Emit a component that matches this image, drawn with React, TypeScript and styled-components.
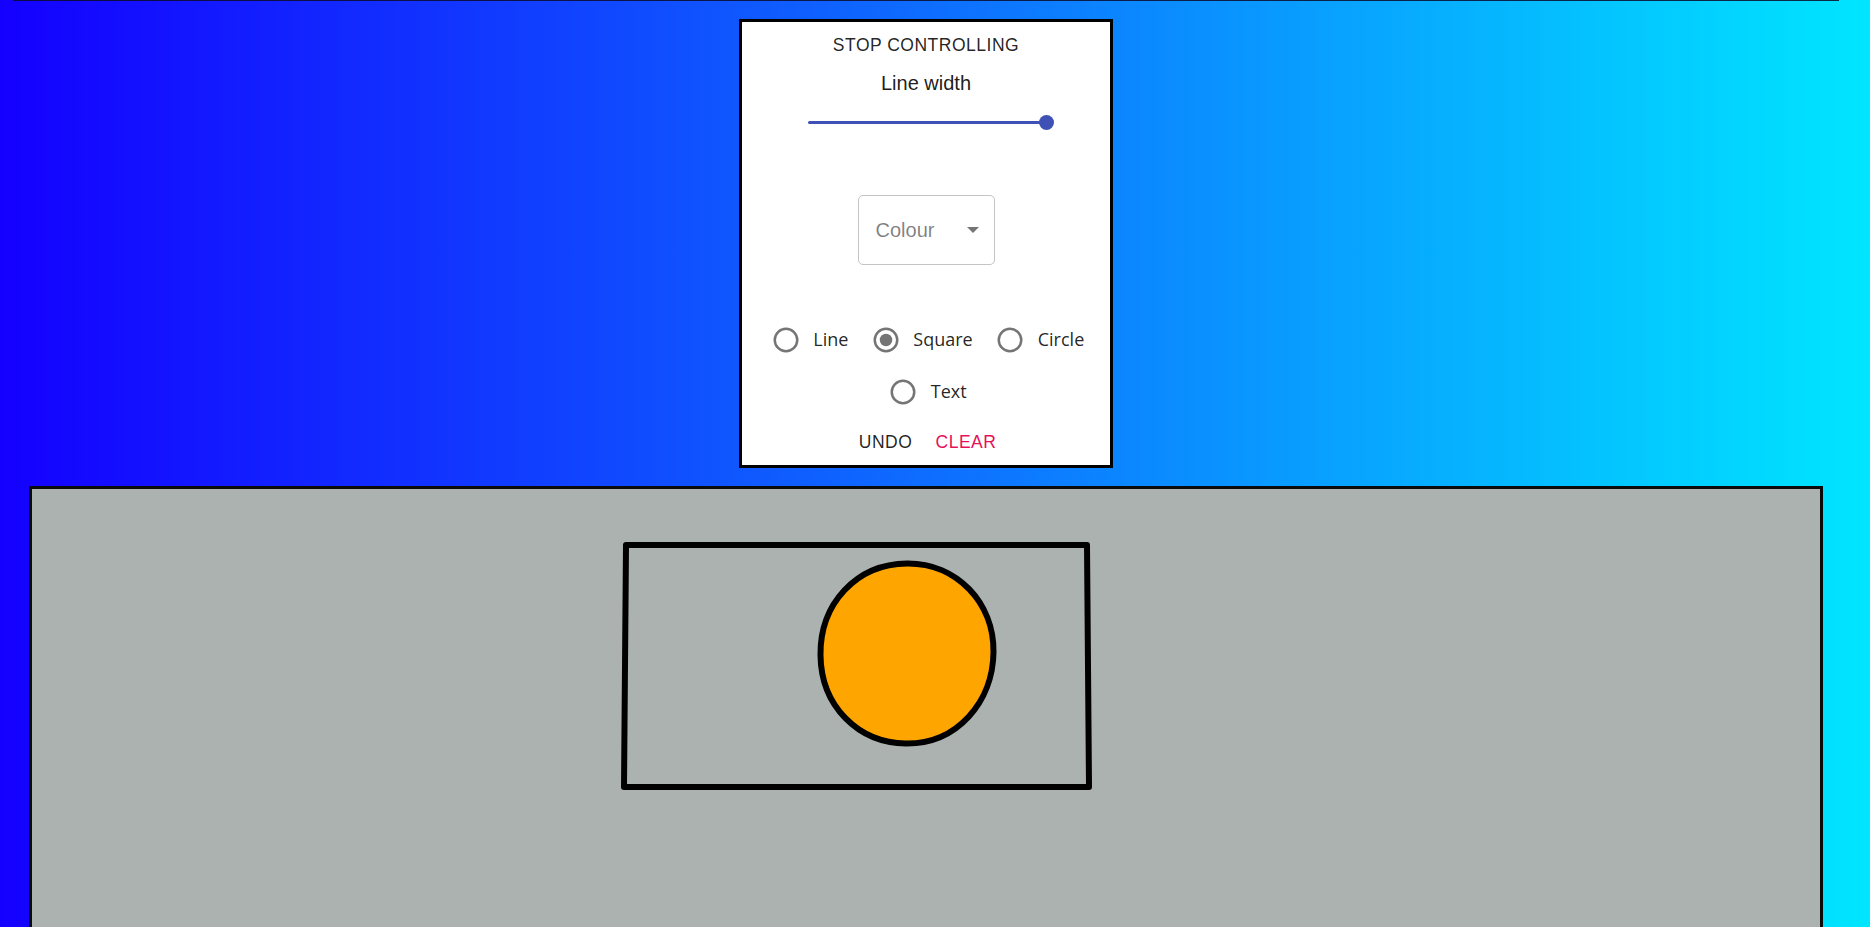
import React from "react";
import styled, { createGlobalStyle } from "styled-components";

const GlobalStyle = createGlobalStyle`
  html, body {
    margin: 0;
    padding: 0;
    height: 100%;
    overflow: hidden;
  }
  body {
    background: linear-gradient(to right, #1400ff 0%, #0e6eff 50%, #00e6ff 100%);
    font-family: "Liberation Sans", Arial, sans-serif;
  }
`;

const Page = styled.div`
  width: 1852px;
  min-height: 100vh;
  display: flex;
  flex-direction: column;
  align-items: center;
`;

const TopRule = styled.div`
  align-self: stretch;
  margin: 0 13px;
  height: 1px;
  background: rgba(10, 10, 40, 0.85);
`;

const Panel = styled.div`
  box-sizing: border-box;
  margin-top: 18px;
  width: 374px;
  border: 3px solid #000;
  background: #fff;
  display: flex;
  flex-direction: column;
  align-items: center;
  padding-bottom: 1px;
`;

const TextButton = styled.button<{ $tone?: "default" | "secondary" }>`
  box-sizing: border-box;
  height: 45px;
  min-width: 80px;
  padding: 2px 10px 0;
  border: none;
  background: transparent;
  display: flex;
  align-items: center;
  justify-content: center;
  font-family: "Liberation Sans", Arial, sans-serif;
  font-size: 17.5px;
  letter-spacing: 0.5px;
  text-transform: uppercase;
  color: ${(p) => (p.$tone === "secondary" ? "#e8105a" : "rgba(0,0,0,0.87)")};
  cursor: pointer;
`;

const Title = styled.div`
  margin-top: 1px;
  font-size: 20px;
  line-height: 30px;
  color: rgba(0, 0, 0, 0.9);
`;

const Slider = styled.div`
  margin-top: 6px;
  margin-left: 2px;
  width: 238px;
  height: 36px;
  display: flex;
  align-items: center;
`;

const Track = styled.div`
  flex: 1;
  height: 3px;
  border-radius: 2px;
  background: #3f51b5;
`;

const Thumb = styled.div`
  flex: none;
  width: 15px;
  height: 15px;
  margin: 0 -7.5px;
  border-radius: 50%;
  background: #3f51b5;
`;

const Select = styled.div`
  box-sizing: border-box;
  margin-top: 55px;
  width: 137px;
  height: 70px;
  border: 1px solid #c4c4c4;
  border-radius: 5px;
  display: flex;
  align-items: center;
  padding: 0 15px 0 17px;
`;

const SelectLabel = styled.span`
  font-size: 20px;
  color: rgba(0, 0, 0, 0.5);
`;

const Arrow = styled.div`
  margin-left: auto;
  width: 0;
  height: 0;
  border-left: 6px solid transparent;
  border-right: 6px solid transparent;
  border-top: 6px solid #757575;
`;

const RadioGroup = styled.div`
  margin-top: 49px;
  width: 368px;
  display: flex;
  flex-wrap: wrap;
  justify-content: center;
  column-gap: 22.5px;
  padding-left: 3px;
  box-sizing: border-box;
`;

const RadioItem = styled.label`
  height: 52px;
  display: flex;
  align-items: center;
  gap: 12.5px;
  cursor: pointer;
`;

const RadioLabel = styled.span`
  font-family: "Open Sans", "Noto Sans", sans-serif;
  font-size: 18px;
  line-height: 22px;
  margin-top: -3px;
  color: rgba(0, 0, 0, 0.87);
`;

const Actions = styled.div`
  display: flex;
  justify-content: center;
  margin-top: 1px;
`;

const Canvas = styled.div`
  box-sizing: border-box;
  margin-top: 18px;
  width: 1794px;
  height: 620px;
  flex: none;
  border: 3px solid #0b0b0b;
  background: #acb2b0;
`;

const Drawing = styled.svg`
  display: block;
  width: 100%;
  height: 100%;
`;

function RadioIcon({ checked }: { checked?: boolean }) {
  return (
    <svg width="30" height="30" viewBox="0 0 24 24">
      <circle cx="12" cy="12" r="9" fill="none" stroke="#757575" strokeWidth="2" />
      {checked && <circle cx="12" cy="12" r="5" fill="#757575" />}
    </svg>
  );
}

const shapes = ["Line", "Square", "Circle", "Text"];

export default function App() {
  // canvas content origin in page coordinates
  const ox = 32;
  const oy = 489;
  return (
    <>
      <GlobalStyle />
      <Page>
        <TopRule />
        <Panel>
          <TextButton>Stop controlling</TextButton>
          <Title>Line width</Title>
          <Slider>
            <Track />
            <Thumb />
          </Slider>
          <Select>
            <SelectLabel>Colour</SelectLabel>
            <Arrow />
          </Select>
          <RadioGroup>
            {shapes.map((s) => (
              <RadioItem key={s}>
                <RadioIcon checked={s === "Square"} />
                <RadioLabel>{s}</RadioLabel>
              </RadioItem>
            ))}
          </RadioGroup>
          <Actions>
            <TextButton>Undo</TextButton>
            <TextButton $tone="secondary">Clear</TextButton>
          </Actions>
        </Panel>
        <Canvas>
          <Drawing viewBox={`${ox} ${oy} 1788 614`} preserveAspectRatio="xMinYMin meet">
            <path
              d="M626 545 L1087 545 L1089 787 L624 787 Z"
              fill="none"
              stroke="#000"
              strokeWidth="6"
              strokeLinejoin="round"
            />
            <path
              d="M907 563.5
                 C957 563 994 603 993.5 652
                 C993 702 957 744 906 743.5
                 C858 743 821 706 820.5 655
                 C820 604 856 564 907 563.5 Z"
              fill="#ffa500"
              stroke="#000"
              strokeWidth="6"
            />
          </Drawing>
        </Canvas>
      </Page>
    </>
  );
}
